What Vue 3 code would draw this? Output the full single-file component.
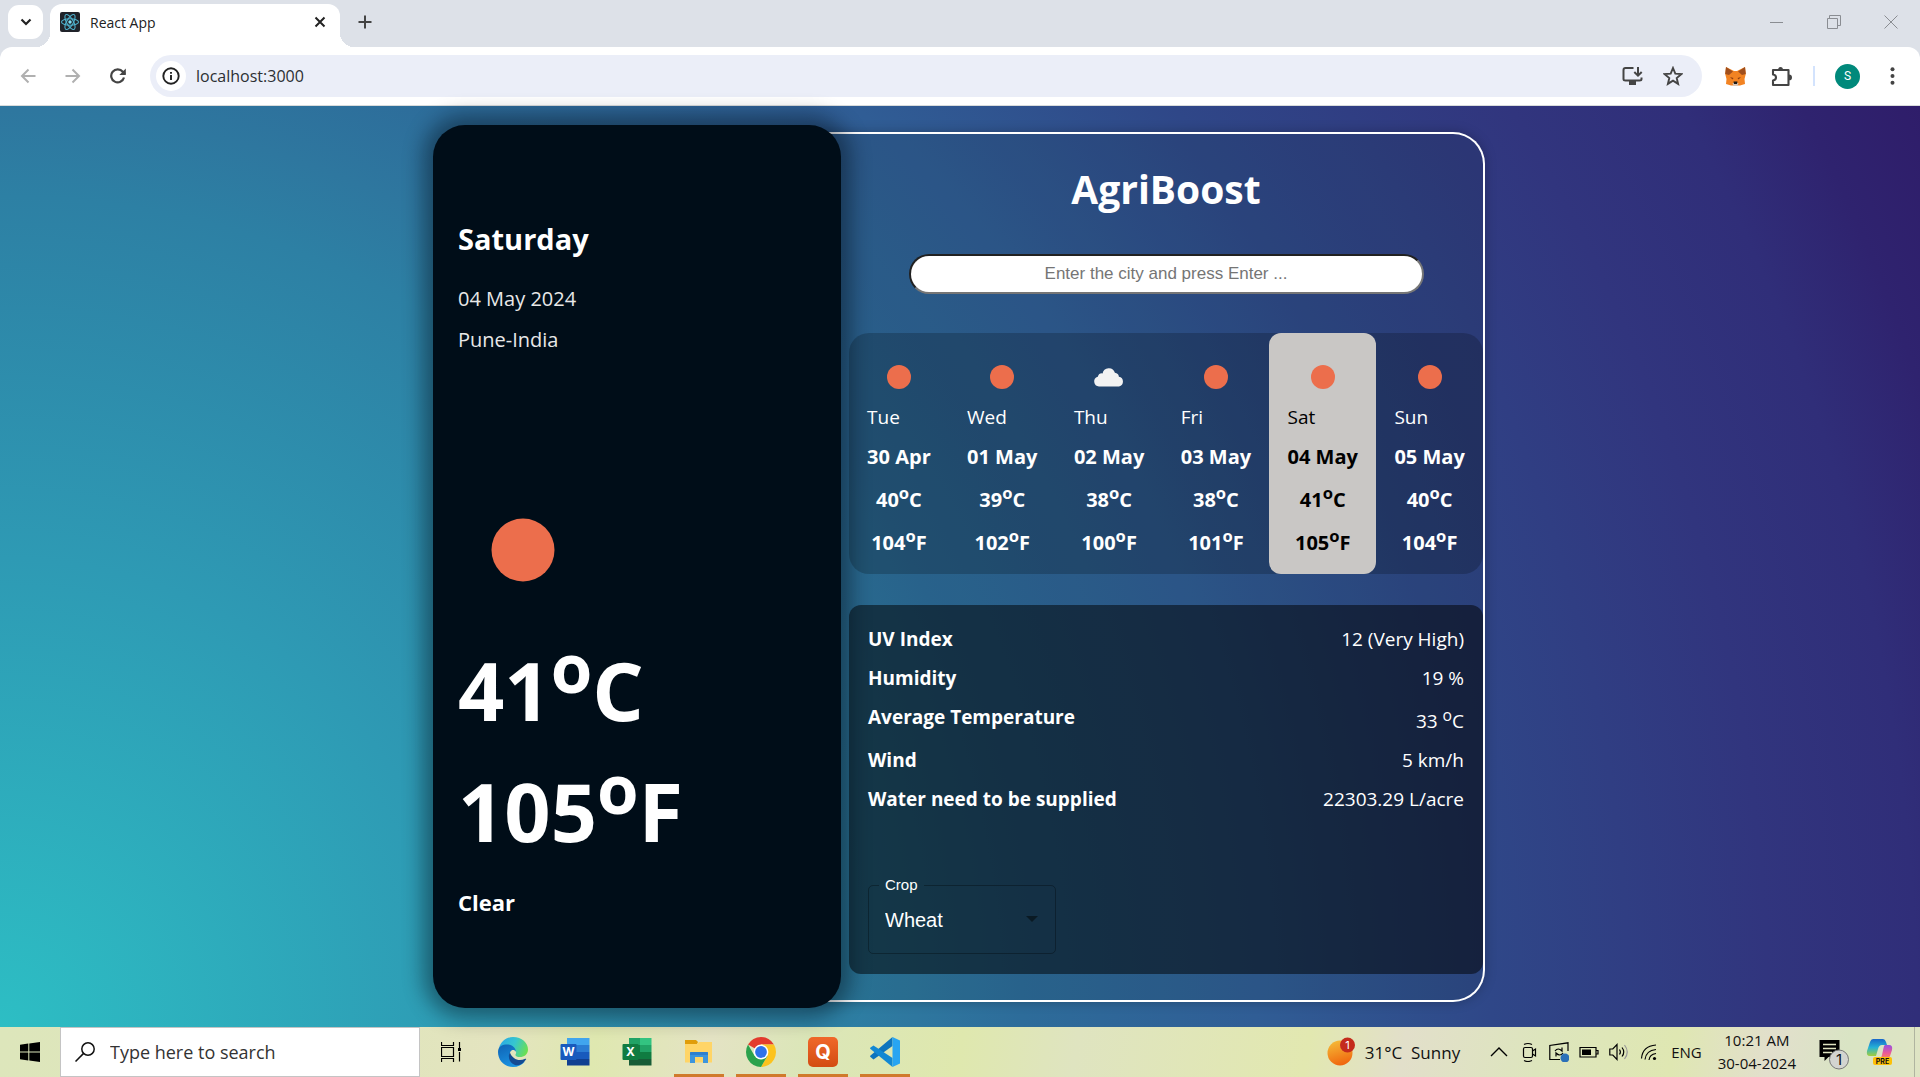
<script setup>
import { ref } from 'vue'

const address = ref('localhost:3000')
const city = ref('')
const query = ref('')
const crop = ref('Wheat')
const crops = ['Wheat', 'Rice', 'Maize']

const days = [
  { name: 'Tue', date: '30 Apr', c: 40, f: 104, sky: 'clear' },
  { name: 'Wed', date: '01 May', c: 39, f: 102, sky: 'clear' },
  { name: 'Thu', date: '02 May', c: 38, f: 100, sky: 'cloud' },
  { name: 'Fri', date: '03 May', c: 38, f: 101, sky: 'clear' },
  { name: 'Sat', date: '04 May', c: 41, f: 105, sky: 'clear', active: true },
  { name: 'Sun', date: '05 May', c: 40, f: 104, sky: 'clear' }
]
</script>

<template>
  <div class="screen">
    <header class="chrome">
      <div class="tabs">
        <button class="tab-search" aria-label="Search tabs">
          <svg width="12" height="12" viewBox="0 0 12 12"><path d="M1.5 3.5 6 8l4.500-4.500" fill="none" stroke="#222" stroke-width="2.200" /></svg>
        </button>
        <div class="tab">
          <svg width="20" height="20" viewBox="0 0 20 20">
            <rect width="20" height="20" rx="2" fill="#20232a" />
            <g fill="none" stroke="#4fb3cf" stroke-width="1.100">
              <ellipse cx="10" cy="10" rx="8.500" ry="3.300" />
              <ellipse cx="10" cy="10" rx="8.500" ry="3.300" transform="rotate(60 10 10)" />
              <ellipse cx="10" cy="10" rx="8.500" ry="3.300" transform="rotate(120 10 10)" />
            </g>
            <circle cx="10" cy="10" r="1.700" fill="#7fe0f5" />
          </svg>
          <span class="tab-title">React App</span>
          <button class="plain" aria-label="Close tab">
            <svg width="12" height="12" viewBox="0 0 12 12"><path d="M1.500 1.500l9 9M10.500 1.500l-9 9" stroke="#222" stroke-width="2" /></svg>
          </button>
        </div>
        <button class="plain new-tab" aria-label="New tab">
          <svg width="14" height="14" viewBox="0 0 14 14"><path d="M7 .5v13M.5 7h13" stroke="#444" stroke-width="2" /></svg>
        </button>
        <div class="window-controls">
          <button class="plain" aria-label="Minimize"><svg width="14" height="14" viewBox="0 0 14 14"><path d="M0 7.500h13" stroke="#8a8d92" /></svg></button>
          <button class="plain" aria-label="Restore"><svg width="14" height="14" viewBox="0 0 14 14"><path d="M.5 3.500h10v10H.5zM2.500 3.500v-3h11v10h-3" fill="none" stroke="#8a8d92" /></svg></button>
          <button class="plain" aria-label="Close"><svg width="14" height="14" viewBox="0 0 14 14"><path d="M.5.5l13 13M13.500.5l-13 13" stroke="#8a8d92" /></svg></button>
        </div>
      </div>

      <div class="toolbar">
        <div class="nav">
          <button class="plain" aria-label="Back"><svg width="16" height="16" viewBox="0 0 16 16"><path d="M15.500 8H2M8.500 1.500 2 8l6.500 6.500" fill="none" stroke="#b0b0b0" stroke-width="2" /></svg></button>
          <button class="plain" aria-label="Forward"><svg width="16" height="16" viewBox="0 0 16 16"><path d="M.5 8H14M7.500 1.500 14 8l-6.500 6.500" fill="none" stroke="#b0b0b0" stroke-width="2" /></svg></button>
          <button class="plain" aria-label="Reload"><svg width="16" height="16" viewBox="0 0 16 16"><path d="M14 9.500A6.500 6.500 0 1 1 12.800 3.800L15 6" fill="none" stroke="#444" stroke-width="2.200" /><path d="M15.800.5v6.500H9.300z" fill="#444" /></svg></button>
        </div>
        <div class="omnibox">
          <span class="info">
            <svg width="18" height="18" viewBox="0 0 18 18"><circle cx="9" cy="9" r="7.700" fill="none" stroke="#222" stroke-width="1.900" /><path d="M9 8v5M9 5v1.800" stroke="#222" stroke-width="1.900" /></svg>
          </span>
          <input v-model="address" class="address" type="text" aria-label="Address" />
          <button class="plain" aria-label="Install app">
            <svg width="21" height="20" viewBox="0 0 21 20"><path d="M11.500 2H3.500Q1.500 2 1.500 4v9q0 1.500 2 1.500h14q2 0 2-1.500v-1.500" fill="none" stroke="#444" stroke-width="2" /><path d="M7 15h7v4H7z" fill="#444" /><path d="M16 1v8M12.300 6 16 9.700 19.700 6" fill="none" stroke="#444" stroke-width="2" /></svg>
          </button>
          <button class="plain" aria-label="Bookmark">
            <svg width="20" height="20" viewBox="0 0 20 20"><path d="M10 2l2.300 5.600 6 .5-4.600 3.900 1.400 5.900L10 14.700l-5.100 3.200 1.400-5.900L1.700 8.100l6-.5z" fill="none" stroke="#444" stroke-width="1.900" /></svg>
          </button>
        </div>
        <div class="extensions">
          <svg width="21" height="20" viewBox="0 0 21 20">
            <path d="M1 1l8 4h3l8-4 .8 7-1.300 5 .5 5-5 1.500h-9L1 18l.5-5L.2 8z" fill="#f28322" />
            <path d="M1 1l7 4.500-4 3.500-3.800-1zM20 1l-7 4.500 4 3.500 3.800-1z" fill="#a04f1d" />
            <path d="M5 11l3.500 1-1 1.500zM16 11l-3.500 1 1 1.500z" fill="#8c3f14" /><path d="M7.500 17h6l-1 3h-4z" fill="#d8c4b4" /><path d="M8.500 15.500h4L12 18H9z" fill="#1a1a1a" />
          </svg>
          <button class="plain" aria-label="Extensions">
            <svg width="22" height="21" viewBox="0 0 22 21"><path d="M2 4h15.500v15H2v-4.500c4-.5 4-5.500 0-6z" fill="none" stroke="#444" stroke-width="2.100" stroke-linejoin="round" /><path d="M7 4a2.500 3 0 0 1 5 0zM18 8.500a3 2.900 0 0 1 0 5.800z" fill="#444" /></svg>
          </button>
          <span class="divider"></span>
          <button class="avatar" aria-label="Profile">S</button>
          <button class="plain" aria-label="Menu">
            <svg width="5" height="18" viewBox="0 0 5 18" fill="#444"><circle cx="2.500" cy="2.200" r="2" /><circle cx="2.500" cy="9" r="2" /><circle cx="2.500" cy="15.800" r="2" /></svg>
          </button>
        </div>
      </div>
    </header>

    <main class="page">
      <div class="weather">
        <section class="today">
          <h2>Saturday</h2>
          <p class="date">04 May 2024</p>
          <p class="place">Pune-India</p>
          <svg class="big-sun" width="64" height="64" viewBox="0 0 64 64"><circle cx="32" cy="32" r="31.500" fill="#ec6e4c" /></svg>
          <p class="big">41<sup>o</sup>C</p>
          <p class="big second">105<sup>o</sup>F</p>
          <p class="sky">Clear</p>
        </section>

        <section class="panel">
          <h1>AgriBoost</h1>
          <input v-model="city" class="city" type="text" placeholder="Enter the city and press Enter ..." aria-label="City" />
          <ul class="week">
            <li v-for="day in days" :key="day.name" :class="{ active: day.active }">
              <svg class="icon" width="40" height="40" viewBox="0 0 40 40">
                <circle v-if="day.sky === 'clear'" cx="20" cy="20" r="12" fill="#ec6e4c" />
                <path v-else d="M10 29.500a5 5 0 0 1-1.200-9.800 4.500 4.500 0 0 1 4.800-3.300 6.300 6.300 0 0 1 12.300-.6 4.500 4.500 0 0 1 4 3.900 5 5 0 0 1 .1 9.800z" fill="#f2f2f2" />
              </svg>
              <div class="when">
                <span>{{ day.name }}</span>
                <b>{{ day.date }}</b>
              </div>
              <b class="deg">{{ day.c }}<sup>o</sup>C</b>
              <b class="deg">{{ day.f }}<sup>o</sup>F</b>
            </li>
          </ul>

          <div class="details">
            <dl>
              <div><dt>UV Index</dt><dd>12 (Very High)</dd></div>
              <div><dt>Humidity</dt><dd>19 %</dd></div>
              <div class="tall"><dt>Average Temperature</dt><dd>33 <sup>o</sup>C</dd></div>
              <div><dt>Wind</dt><dd>5 km/h</dd></div>
              <div><dt>Water need to be supplied</dt><dd>22303.29 L/acre</dd></div>
            </dl>
            <fieldset>
              <legend><label for="crop">Crop</label></legend>
              <select id="crop" v-model="crop">
                <option v-for="name in crops" :key="name">{{ name }}</option>
              </select>
              <svg class="caret" width="12" height="6" viewBox="0 0 12 6"><path d="M0 0h12L6 6z" fill="#0a1a24" /></svg>
            </fieldset>
          </div>
        </section>
      </div>
    </main>

    <footer class="taskbar">
      <button class="start" aria-label="Start">
        <svg width="20" height="20" viewBox="0 0 20 20"><path d="M0 2.800 8.300 1.600V9.500H0zM9.300 1.500 20 0v9.500H9.300zM0 10.500h8.300v8L0 17.300zM9.300 10.500H20V20L9.300 18.600z" /></svg>
      </button>
      <label class="search">
        <svg width="20" height="20" viewBox="0 0 20 20"><circle cx="13" cy="7" r="6.200" fill="none" stroke="#111" stroke-width="1.500" /><path d="M8.600 11.400.5 19.500" stroke="#111" stroke-width="1.500" /></svg>
        <input v-model="query" type="text" placeholder="Type here to search" aria-label="Type here to search" />
      </label>
      <div class="apps">
        <button aria-label="Task View">
          <svg width="20" height="20" viewBox="0 0 20 20" fill="none" stroke="#000"><path d="M.5 0v3.500h12V0M.5 5.500h12v9H.5zM.5 20v-3.500h12V20M18.500 0v6M18.500 10v9.500" stroke-width="1.200" /><path d="M17 6h3v3h-3z" fill="#000" stroke="none" /></svg>
        </button>
        <button aria-label="Edge">
          <svg width="30" height="30" viewBox="0 0 30 30">
            <defs>
              <linearGradient id="edge-top" x1="0" y1="0.300" x2="1" y2="0.600"><stop offset="0" stop-color="#2aa9e6" /><stop offset=".5" stop-color="#36c6cf" /><stop offset="1" stop-color="#6be04f" /></linearGradient>
              <linearGradient id="edge-body" x1="0" y1="0" x2="0.500" y2="1"><stop offset="0" stop-color="#0f62b4" /><stop offset="1" stop-color="#1a93e2" /></linearGradient>
            </defs>
            <path d="M1 11C3 4 9 0 15 0c9 0 15 6 15 12.500 0 5-4 7.500-8 7.500-3 0-5-1-4.500-2.500 1.500-2 .5-6-4.500-7-5-.8-10 0-12 .5z" fill="url(#edge-top)" />
            <path d="M0 15C0 9 5 7.500 9 7.500c5 0 9 3.500 9 7.500-1-2-3-2.500-4.500-1.500C11 15 11 21 15 24c4 3 9 2 12 .5C24 28 20 30 15 30 6 30 0 23 0 15z" fill="url(#edge-body)" />
            <path d="M12 15.500C10 18 10 25 17 28c3 1 8-.5 11-5.500.5-.8-.2-1-.8-.7-4 2-8.200 1.700-11.200-.8-2-1.600-3.500-3.500-4-5.500z" fill="#134b93" />
          </svg>
        </button>
        <button aria-label="Word">
          <svg width="30" height="30" viewBox="0 0 30 30">
            <path d="M7 1h22.500v7H7z" fill="#41a5ee" /><path d="M7 8h22.500v7H7z" fill="#2b7cd3" /><path d="M7 15h22.500v7H7z" fill="#185abd" /><path d="M7 22h22.500v6.500H7z" fill="#103f91" />
            <rect x=".5" y="7" width="16" height="16" rx="1" fill="#185abd" /><text x="8.500" y="19" class="glyph small">W</text>
          </svg>
        </button>
        <button aria-label="Excel">
          <svg width="30" height="30" viewBox="0 0 30 30">
            <path d="M7 1h11v7H7z" fill="#21a366" /><path d="M18 1h11.500v7H18z" fill="#33c481" /><path d="M7 8h11v7H7z" fill="#107c41" /><path d="M18 8h11.500v7H18z" fill="#21a366" /><path d="M7 15h22.500v7H7z" fill="#107c41" /><path d="M7 22h22.500v6.500H7z" fill="#185c37" />
            <rect x=".5" y="7" width="16" height="16" rx="1" fill="#107c41" /><text x="8.500" y="19" class="glyph small">X</text>
          </svg>
        </button>
        <button class="running" aria-label="File Explorer">
          <svg width="30" height="30" viewBox="0 0 30 30"><path d="M1 3h11l2 2-2 4H1z" fill="#e09d0a" /><path d="M1 7h12l2-2h13v20.500H1z" fill="#ffd567" /><path d="M6 26V16q0-1 1-1h16q1 0 1 1v10h-5v-6h-8v6z" fill="#3d95dd" /><path d="M6 16q0-1 1-1h16q1 0 1 1v2H6z" fill="#2f80cf" /></svg>
        </button>
        <button class="running" aria-label="Chrome">
          <svg width="30" height="30" viewBox="0 0 30 30">
            <path d="M15 15 2.010 7.500A15 15 0 0 1 27.990 7.500L28 7.500H15z" fill="#e33b2e" />
            <path d="M15 15V7.500h12.990A15 15 0 0 1 15 30l6.500-11.200z" fill="#fcc31e" />
            <path d="M15 15l6.500 3.800L15 30A15 15 0 0 1 2.010 7.500L8.500 18.800z" fill="#2ba24c" />
            <circle cx="15" cy="15" r="7.400" fill="#fff" /><circle cx="15" cy="15" r="5.900" fill="#2f72e8" />
          </svg>
        </button>
        <button class="running" aria-label="Quick app">
          <svg width="30" height="30" viewBox="0 0 30 30"><defs><linearGradient id="q-bg" x1="0" y1="0" x2="0" y2="1"><stop offset="0" stop-color="#f0682a" /><stop offset="1" stop-color="#d34c12" /></linearGradient></defs><rect width="30" height="30" rx="5" fill="url(#q-bg)" /><text x="15" y="22" class="glyph">Q</text></svg>
        </button>
        <button class="running" aria-label="Visual Studio Code">
          <svg width="30" height="30" viewBox="0 0 30 30"><path d="M22.500 0v9L3.500 22.500.5 20q-.8-.8 0-1.600z" fill="#0d74bd" /><path d="M22.500 30v-9L3.500 8.500.5 10.500q-.8.8 0 1.600z" fill="#1288d3" /><path d="M22.500 0 30 3.500v23L22.500 30z" fill="#28a5f2" /></svg>
        </button>
      </div>

      <div class="tray">
        <button class="forecast">
          <svg width="30" height="30" viewBox="0 0 30 30"><defs><linearGradient id="sun-bg" x1="0.200" y1="0" x2="0.500" y2="1"><stop offset="0" stop-color="#f5bc38" /><stop offset="1" stop-color="#f0660e" /></linearGradient></defs><circle cx="13" cy="16" r="12.500" fill="url(#sun-bg)" /><circle cx="20.500" cy="8" r="7.500" fill="#c42b1c" /><text x="20.500" y="12" class="glyph badge">1</text></svg>
          <span>31°C&nbsp; Sunny</span>
        </button>
        <div class="status">
          <svg width="20" height="20" viewBox="0 0 20 20"><path d="M2 14l8-8 8 8" fill="none" stroke="#000" stroke-width="1.400" /></svg>
          <svg width="20" height="20" viewBox="0 0 20 20" fill="none" stroke="#000" stroke-width="1.200"><rect x="4.500" y="5.500" width="9" height="10" rx="1.500" /><path d="M13.500 9l3-2v7l-3-2M5 2.500q4-2 8 0M5 18.500q4 2 8 0" /></svg>
          <svg width="20" height="20" viewBox="0 0 20 20" fill="none" stroke="#000" stroke-width="1.200"><path d="M19 9V.8L.8 3.500v14H11" /><path d="M6 9q3-4 7 0V5.500M14 11q-3 4-7 0v3.500" /><circle cx="16" cy="16" r="4.500" fill="#2b70b8" stroke="none" /></svg>
          <svg width="20" height="20" viewBox="0 0 20 20"><path d="M1 5.500h16v9.500H1zM17 8.500h2v3.500h-2" fill="none" stroke="#000" stroke-width="1.200" /><path d="M3 7.500h9v5.500H3z" /></svg>
          <svg width="20" height="20" viewBox="0 0 20 20" fill="none" stroke="#000" stroke-width="1.200"><path d="M.8 7h3L8 2.500v15L3.800 13h-3zM10.500 7.500q1.800 2.500 0 5M13 5.500q3.500 4.500 0 9" /><path d="M15.500 3q5.500 7 0 14" stroke="#999" /></svg>
          <svg width="20" height="20" viewBox="0 0 20 20" fill="none" stroke="#000" stroke-width="1.200"><path d="M2.500 16.500Q3.500 4 17 3M6 17.500Q7 8.500 17 7.500M10 18q.5-5.500 7-6.500" /><circle cx="15.500" cy="16.500" r="1.600" fill="#000" stroke="none" /></svg>
        </div>
        <span class="lang">ENG</span>
        <div class="clock"><span>10:21 AM</span><span>30-04-2024</span></div>
        <svg width="30" height="36" viewBox="0 0 30 36"><path d="M.5 6h20v17h-11l-4 4v-4h-5z" /><path d="M4 10.500h13M4 14.500h13M4 18.500h9" stroke="#dfe3c0" stroke-width="1.400" /><circle cx="20" cy="25.500" r="9.500" fill="#d3d4d0" stroke="#777" /><text x="20" y="31" class="glyph dark">1</text></svg>
        <svg width="28" height="28" viewBox="0 0 28 28">
          <defs><linearGradient id="co-l" x1="0" y1="0" x2="0" y2="1"><stop offset="0" stop-color="#1766c9" /><stop offset=".5" stop-color="#25b2d6" /><stop offset="1" stop-color="#a3cf3a" /></linearGradient><linearGradient id="co-r" x1="0.500" y1="0" x2="0.500" y2="1"><stop offset="0" stop-color="#9a4fe0" /><stop offset=".6" stop-color="#ee5b92" /><stop offset="1" stop-color="#f58a5c" /></linearGradient></defs>
          <path d="M7 1h10q2 0 3 3l1 3h-5q-3 0-4 4l-2 7H4q-4 0-3-5L4 4q1-3 3-3z" fill="url(#co-l)" />
          <path d="M19 7h4q4 0 3 5l-2 6q-1 3-4 3h-8q3 0 4-4l1.500-7q.5-3 1.500-3z" fill="url(#co-r)" />
          <rect x="7" y="19" width="19" height="8" rx="2" fill="#fdc107" /><text x="16.500" y="26" class="glyph pre">PRE</text>
        </svg>
        <span class="show-desktop"></span>
      </div>
    </footer>
  </div>
</template>

<style>
body { margin: 0; }
</style>

<style scoped>
* { box-sizing: border-box; }
.screen { min-height: 100vh; display: flex; flex-direction: column; font-family: "Open Sans", "Noto Sans", sans-serif; color: #fff; }
button { font: inherit; border: 0; cursor: pointer; }
svg { display: block; flex: none; }
.plain { display: flex; padding: 0; background: none; }
h1, h2, p, ul, dl, dd { margin: 0; padding: 0; }

.chrome { background: #dde1e8; border-bottom: 1px solid #d9dcdc; color: #222; }
.tabs { display: flex; align-items: center; height: 47px; padding-left: 8px; }
.tab-search { display: grid; place-items: center; width: 35px; height: 34px; margin: 0 7px 3px 0; padding: 0; border-radius: 11px; background: #fff; }
.tab { position: relative; display: flex; align-items: center; align-self: flex-end; width: 290px; height: 43px; padding: 0 14px 7px 10px; gap: 10px; border-radius: 12px 12px 0 0; background: #fff; }
.tab::before, .tab::after { content: ""; position: absolute; bottom: 0; width: 14px; height: 14px; }
.tab::before { left: -14px; background: radial-gradient(circle at 0 0, transparent 14px, #fff 14px); }
.tab::after { right: -14px; background: radial-gradient(circle at 100% 0, transparent 14px, #fff 14px); }
.tab-title { flex: 1; font-size: 14px; }
.new-tab { margin-left: 18px; margin-bottom: 3px; }
.window-controls { display: flex; gap: 43px; margin-left: auto; padding: 0 22px 4px 0; }
.toolbar { display: flex; align-items: center; height: 58px; padding: 0 25px 0 20px; border-radius: 12px 12px 0 0; background: #fff; }
.nav { display: flex; gap: 29px; margin-right: 24px; }
.omnibox { display: flex; flex: 1; align-items: center; height: 42px; padding: 0 19px 0 6px; gap: 20px; border-radius: 21px; background: #ebeef8; }
.info { display: grid; place-items: center; width: 30px; height: 30px; border-radius: 50%; background: #fff; }
.address { flex: 1; min-width: 0; margin-left: -10px; padding: 0; border: 0; outline: 0; background: none; font: 16px "Open Sans", "Noto Sans", sans-serif; color: #2c2f33; }
.extensions { display: flex; align-items: center; gap: 20px; margin-left: 23px; }
.extensions > svg { margin-right: 5px; }
.divider { width: 2px; height: 20px; background: #d3e3fd; }
.avatar { width: 25px; height: 25px; padding: 0; border-radius: 50%; background: #00897b; color: #fff; font: 12px Roboto, sans-serif; }
.extensions .plain:last-child { margin-left: 10px; }

.page {
  flex: 1; display: flex; justify-content: center; align-items: stretch; padding: 19px 18px 19px 16px;
  background: radial-gradient(circle 2130px at 0 100%, #2dbec4 0, #2e9ab4 22%, #2d80a4 39%, #2e779f 43%, #2d6c9a 48%, #305d95 59%, #2f4788 70%, #31357e 83%, #302e79 90%, #2f236f 95%, #2f1d6a 100%);
}
.weather { display: flex; width: 100%; max-width: 1052px; }
.today { position: relative; z-index: 1; width: 408px; flex: none; padding: 94px 25px 88px; border-radius: 32px; background: #000d18; box-shadow: 0 0 20px 10px rgba(0, 10, 20, 0.42); }
.today h2 { font-size: 29px; line-height: 40px; }
.date, .place { font-size: 20px; line-height: 28px; color: #e8e8e8; }
.date { margin-top: 26px; }
.place { margin-top: 13px; }
.big-sun { margin: 164px 0 58px 33px; }
.big { font-size: 81px; font-weight: 700; line-height: 100px; }
.second { margin-top: 21px; }
.sky { margin-top: 25px; font-size: 22px; font-weight: 700; line-height: 32px; }
sup { font-size: 0.83em; line-height: 0; }

.panel { flex: 1; display: flex; flex-direction: column; margin: 7px 0 6px -34px; padding: 29px 0 25px 42px; border: 2px solid #fff; border-left: 0; border-radius: 0 32px 32px 0; background: rgba(15, 40, 50, 0.14); box-shadow: 0 0 12px rgba(0, 0, 0, 0.25); }
.panel h1 { font-size: 39px; line-height: 52px; text-align: center; }
.city { align-self: center; width: 515px; max-width: 90%; height: 40px; margin: 39px 0; border: 2px inset #767676; border-radius: 20px; background: #fff; text-align: center; font: 17px "Liberation Sans", sans-serif; }
.city::placeholder { color: #757575; }
.week { display: grid; grid-template-columns: 100fr repeat(5, 107fr); list-style: none; border-radius: 20px; background: rgba(0, 0, 0, 0.2); font-size: 19px; line-height: 28px; }
.week b { font-size: 20px; }
.week li { display: flex; flex-direction: column; align-items: center; padding: 24px 0 17px; border-radius: 12px; white-space: nowrap; }
.week .active { background: #c9c7c5; color: #000; }
.when { display: flex; flex-direction: column; gap: 12px; margin-top: 6px; }
.deg { margin-top: 15px; }
.details { margin-top: 31px; padding: 20px 19px; border-radius: 12px; background: rgba(0, 0, 0, 0.5); font-size: 19px; line-height: 28px; }
.details dl { display: flex; flex-direction: column; gap: 11px; }
.details dl div { display: flex; justify-content: space-between; }
.details dt { font-weight: 700; }
.details .tall dd { padding-top: 4px; }
fieldset { position: relative; width: 188px; margin: 62px 0 0; padding: 0 0 8px; border: 1px solid rgba(0, 0, 0, 0.3); border-radius: 5px; font-family: "Liberation Sans", sans-serif; }
legend { margin-left: 10px; padding: 0 6px; font-size: 15px; line-height: 20px; }
select { width: 100%; height: 50px; padding: 0 40px 0 16px; border: 0; outline: 0; appearance: none; background: none; color: #fff; font: 20px "Liberation Sans", sans-serif; }
.caret { position: absolute; right: 17px; bottom: 31px; pointer-events: none; }

.taskbar { display: flex; height: 50px; color: #111; background: linear-gradient(100deg, #dde6bb 0, #e0e5bc 20%, #e4e4c0 26%, #dfe8b0 31%, #e4e3c4 37%, #dbe6b8 42%, #dfe8ae 50%, #dfe4c0 56%, #e2e8b0 68%, #e2dfca 73%, #dde5bd 80%, #dfe7b2 87%, #e2dfcc 92%, #d9e4c4 96%, #dfe4c4 100%); }
.start { display: grid; place-items: center; width: 60px; padding: 0; background: none; }
.search { display: flex; align-items: center; width: 360px; padding-left: 14px; gap: 15px; border: 1px solid #c4c4c4; background: #fff; }
.search input { flex: 1; min-width: 0; padding: 0; border: 0; outline: 0; background: none; font: 18px "Open Sans", "Noto Sans", sans-serif; }
.search input::placeholder { color: #333; }
.apps { display: flex; }
.apps button { display: grid; place-items: center; width: 62px; padding: 0; background: none; position: relative; }
.running::after { content: ""; position: absolute; left: 6px; right: 6px; bottom: 0; height: 3px; background: #d07a2c; }
.glyph { font: 700 20px Inter, sans-serif; fill: #fff; text-anchor: middle; }
.small { font-size: 12px; }
.badge { font-size: 11px; font-weight: 400; }
.dark { font-size: 15px; font-weight: 400; fill: #111; }
.pre { font-size: 7px; fill: #111; }
.tray { display: flex; align-items: center; margin-left: auto; }
.forecast { display: flex; align-items: center; gap: 8px; padding: 0; background: none; color: #111; font-size: 17px; }
.status { display: flex; gap: 10px; margin: 0 12px 0 29px; }
.lang { font-size: 15px; }
.clock { display: flex; flex-direction: column; align-items: center; margin: 0 23px 0 16px; font-size: 15px; line-height: 23px; }
.tray > svg + svg { margin-left: 17px; }
.show-desktop { width: 6px; height: 50px; margin-left: 20px; border-left: 1px solid #b0b4a0; }
</style>
